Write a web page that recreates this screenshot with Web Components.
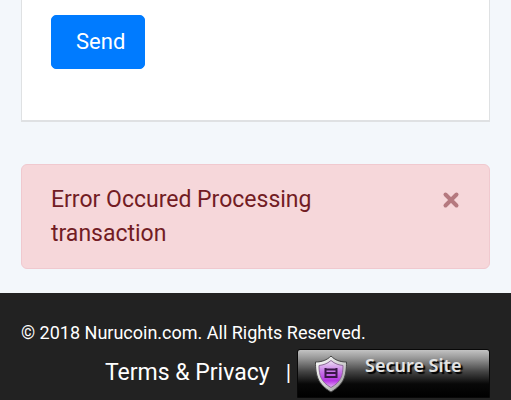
<!DOCTYPE html>
<html lang="en">
<head>
<meta charset="utf-8">
<meta name="viewport" content="width=device-width, initial-scale=1">
<title>Nurucoin</title>
<style>
html, body { margin: 0; height: 100%; }
body { background: #f3f7fb; color: #212529; font: 22px/34px Roboto, sans-serif; overflow: hidden; }
</style>
</head>
<body>
<nuru-page>
  <send-card><send-button>Send</send-button></send-card>
  <alert-box>Error Occured Processing transaction</alert-box>
  <page-footer slot="footer">
    <span slot="copyright">© 2018 Nurucoin.com. All Rights Reserved.</span>
    <footer-link>Terms &amp; Privacy</footer-link>
    <span>|</span>
    <secure-badge>Secure Site</secure-badge>
  </page-footer>
</nuru-page>
<script>
const define = (name, html, setup) => customElements.define(name, class extends HTMLElement {
  constructor() {
    super();
    this.attachShadow({ mode: 'open' }).innerHTML = html;
    if (setup) setup(this);
  }
});

define('nuru-page', `
<style>
:host { display: flex; flex-direction: column; min-height: 100%; }
main { display: flex; flex-direction: column; gap: 42px; padding: 0 21px 24px; }
</style>
<main><slot></slot></main><slot name="footer"></slot>`);

define('send-card', `
<style>
:host { display: block; box-sizing: border-box; padding: 15px 29px 51px; background: #fff; border: solid #dfe1e3; border-width: 0 1px 2px; }
</style><slot></slot>`);

define('send-button', `
<style>
:host { display: flex; }
button { font: inherit; color: #fff; background: #007bff; border: 1px solid #007bff; border-radius: 5px; padding: 9px 19px 9px 24px; cursor: pointer; }
</style><button type="button"><slot></slot></button>`);

define('alert-box', `
<style>
:host { display: flex; align-items: flex-start; gap: 24px; padding: 18px 29px 17px; color: #721c24; background: #f6d7da; border: 1px solid #f0c9cf; border-radius: 6px; }
:host([hidden]) { display: none; }
p { margin: 0; flex: 1; max-width: 340px; font-size: 23px; }
button { display: flex; margin: 8px 0 0 auto; padding: 0; border: 0; background: none; color: #b5797f; cursor: pointer; }
svg { width: 18px; height: 18px; }
</style>
<p role="alert"><slot></slot></p>
<button type="button" aria-label="Close"><svg viewBox="0 0 18 18"><path d="M3.500 3.500 14.500 14.500M14.500 3.500 3.500 14.500" stroke="currentColor" stroke-width="4" stroke-linecap="round"/></svg></button>`,
  el => el.shadowRoot.querySelector('button').addEventListener('click', () => { el.hidden = true; }));

define('page-footer', `
<style>
:host { display: block; flex: 1; color: #fff; background: #222; padding: 22px 21px 0; }
.copy { font-size: 18px; padding-top: 2px; line-height: 32px; }
nav { display: flex; align-items: flex-start; justify-content: flex-end; line-height: 48px; }
::slotted(span:not([slot])) { margin: 0 6px 0 16px; }
</style>
<div class="copy"><slot name="copyright"></slot></div>
<nav><slot></slot></nav>`);

define('footer-link', `
<style>
:host { display: block; font-size: 23px; }
a { color: inherit; text-decoration: none; }
</style><a href="#terms"><slot></slot></a>`);

define('secure-badge', `
<style>
:host { display: block; }
a { display: flex; align-items: flex-start; box-sizing: border-box; width: 193px; height: 49px; padding: 4px 0 0 16px; gap: 16px; color: #e4e4e4; text-decoration: none; border: 1px solid #080808; border-radius: 3px 3px 0 0; background: linear-gradient(#c3c3c3, #969696 18%, #444 46%, #080808 72%, #000); }
svg { width: 35px; height: 40px; flex: none; }
span { font: 600 18px/22px "Noto Sans", sans-serif; text-shadow: 2px 2px 1px #000; }
</style>
<a href="#secure">
<svg viewBox="0 0 35 40" aria-hidden="true">
<defs>
<linearGradient id="rim" x2="1" y2="1"><stop stop-color="#fff"/><stop offset=".6" stop-color="#ccc"/><stop offset="1" stop-color="#888"/></linearGradient>
<linearGradient id="fill" x2="0" y2="1"><stop stop-color="#eee3f4"/><stop offset=".4" stop-color="#c878e8"/><stop offset=".75" stop-color="#b635e3"/><stop offset="1" stop-color="#e5b0f8"/></linearGradient>
</defs>
<path d="M17 2C13 6 8 8 1.500 8c0 13 2 22 15.500 30C30.500 30 32.500 21 32.500 8 26 8 21 6 17 2Z" fill="url(#rim)" stroke="#454545"/>
<path d="M17 6.500C13 10 9 11 5 11.500c0 10 2 16.500 12 22C27 28 29 21.500 29 11.500 25 11 21 10 17 6.500Z" fill="url(#fill)" stroke="#8d6a99"/>
<path d="M11.500 14V24M22.500 14V24M11.500 15.500H22.500M11.500 19H22.500M11.500 23H22.500" fill="none" stroke="#3b1749" stroke-width="2"/>
</svg><span><slot></slot></span></a>`);
</script>
</body>
</html>
